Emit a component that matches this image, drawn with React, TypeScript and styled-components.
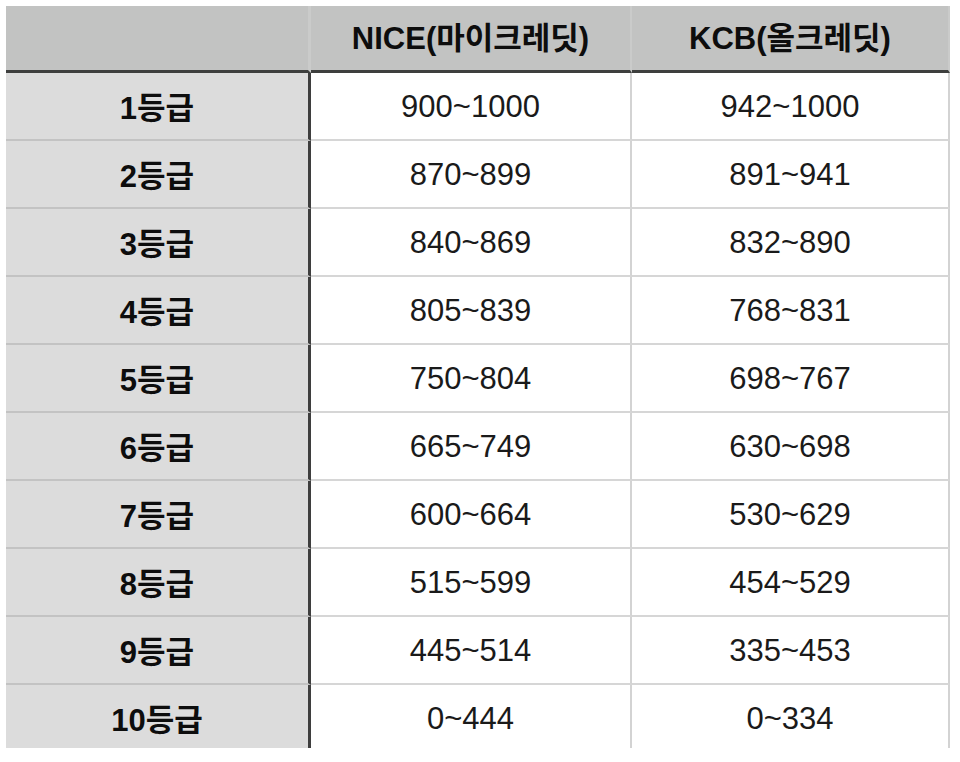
import React from 'react';
import styled, { createGlobalStyle } from 'styled-components';

const rows: [string, string, string][] = [
    ['1등급', '900~1000', '942~1000'],
    ['2등급', '870~899', '891~941'],
    ['3등급', '840~869', '832~890'],
    ['4등급', '805~839', '768~831'],
    ['5등급', '750~804', '698~767'],
    ['6등급', '665~749', '630~698'],
    ['7등급', '600~664', '530~629'],
    ['8등급', '515~599', '454~529'],
    ['9등급', '445~514', '335~453'],
    ['10등급', '0~444', '0~334'],
];

const GlobalStyle = createGlobalStyle`
    html, body {
        margin: 0;
        padding: 0;
        background: #ffffff;
    }
    body {
        font-family: "Liberation Sans", "Noto Sans CJK KR", sans-serif;
        color: #111111;
    }
`;

const Page = styled.div`
    padding: 6px 10px 0 6px;
    width: 960px;
    box-sizing: border-box;
`;

const Frame = styled.div`
    height: 742px;
    overflow: hidden;
`;

const Grid = styled.div`
    display: grid;
    grid-template-columns: 305px 321px 318px;
    grid-auto-rows: 68px;
    grid-template-rows: 67px;
`;

type Kind = 'corner' | 'head' | 'label' | 'value';

const Cell = styled.div<{ $kind: Kind }>`
    display: flex;
    align-items: center;
    justify-content: center;
    box-sizing: border-box;
    white-space: nowrap;
    font-family: "Liberation Sans", "Noto Sans CJK KR", sans-serif;
    font-size: 31px;
    font-weight: ${p => (p.$kind === 'value' ? 400 : 700)};
    color: ${p => (p.$kind === 'value' ? '#1a1a1a' : '#0d0d0d')};
    background: ${p =>
        p.$kind === 'corner' || p.$kind === 'head'
            ? '#c2c3c2'
            : p.$kind === 'label'
            ? '#dcdcdc'
            : '#ffffff'};
    border-bottom: ${p =>
        p.$kind === 'corner' || p.$kind === 'head'
            ? '3px solid #3e3f3e'
            : p.$kind === 'label'
            ? '2px solid #c3c3c3'
            : '2px solid #d6d6d6'};
    border-right: ${p =>
        p.$kind === 'corner'
            ? '3px solid #cacbca'
            : p.$kind === 'label'
            ? '3px solid #3e3e3e'
            : p.$kind === 'head'
            ? '2px solid #cacbca'
            : '2px solid #d3d3d3'};
    padding-top: ${p => (p.$kind === 'head' ? '0' : '1px')};
    padding-bottom: ${p => (p.$kind === 'head' ? '5px' : p.$kind === 'label' ? '3px' : '0')};
`;

export default function App() {
    return (
        <>
            <GlobalStyle />
            <Page>
                <Frame>
                    <Grid>
                        <Cell $kind="corner" />
                        <Cell $kind="head">NICE(마이크레딧)</Cell>
                        <Cell $kind="head">KCB(올크레딧)</Cell>
                        {rows.map(([grade, nice, kcb]) => (
                            <React.Fragment key={grade}>
                                <Cell $kind="label">{grade}</Cell>
                                <Cell $kind="value">{nice}</Cell>
                                <Cell $kind="value">{kcb}</Cell>
                            </React.Fragment>
                        ))}
                    </Grid>
                </Frame>
            </Page>
        </>
    );
}
